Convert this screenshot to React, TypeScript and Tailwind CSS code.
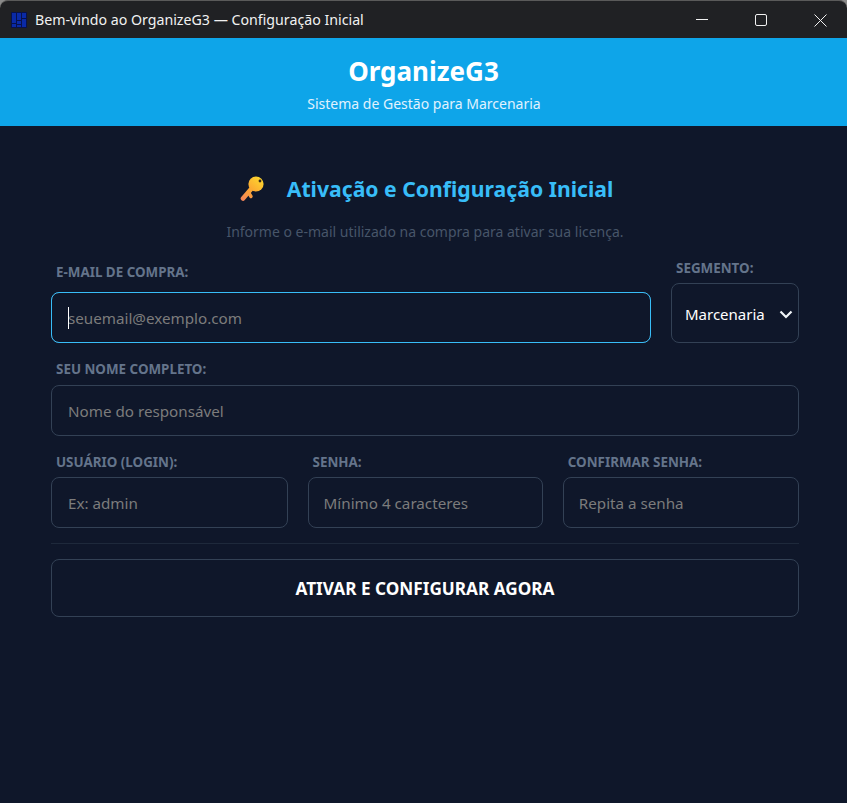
const font = "font-['Noto_Sans','Open_Sans',sans-serif]";

function Field({ label, placeholder, className = "", gapClass = "mb-[7px]", padClass = "pl-4" }: { label: string; placeholder: string; className?: string; gapClass?: string; padClass?: string }) {
  return (
    <div className={className}>
      <label className={`block pl-[5px] h-[17px] leading-[17px] text-[13.4px] font-bold uppercase text-[#64748b] ${gapClass}`}>{label}</label>
      <input
        placeholder={placeholder}
        className={`block w-full h-[51px] pr-4 rounded-lg border border-[#334155] bg-[#0f172a] text-[15.2px] text-white outline-none placeholder:text-[#7c7c7c] ${padClass}`}
      />
    </div>
  );
}

function KeyIcon() {
  return (
    <svg width="26" height="26" viewBox="0 0 26 26">
      <defs>
        <linearGradient id="key" gradientUnits="userSpaceOnUse" x1="2" y1="24" x2="20" y2="3">
          <stop offset="0" stopColor="#f4845a" />
          <stop offset="0.5" stopColor="#fba832" />
          <stop offset="1" stopColor="#fdd22e" />
        </linearGradient>
      </defs>
      <path d="M3 22.5 L12 12" stroke="url(#key)" strokeWidth="4.6" strokeLinecap="round" fill="none" />
      <path d="M8.5 16.5 L11 20.5" stroke="url(#key)" strokeWidth="3.4" strokeLinecap="round" fill="none" />
      <circle cx="16" cy="8" r="7.6" fill="url(#key)" />
      <circle cx="20" cy="5" r="1.4" fill="#3a2a1a" />
    </svg>
  );
}

export default function App() {
  return (
    <div className={`${font} w-[847px] h-[803px] flex flex-col overflow-hidden bg-[#0f172a]`}>
      {/* Window title bar */}
      <div className="bg-[#8a8a8a]">
        <div className="h-[38px] flex items-center rounded-t-lg border-t border-[#5a5a5a] bg-[#202124] pl-[11px]">
          <svg width="16" height="16" viewBox="0 0 16 16" className="mr-2">
            <rect width="16" height="16" fill="#08124a" />
            <path d="M1 1h4v10H1zM1 12h4v3H1zM6 1h4v7H6zM6 9h4v3H6zM6 13h4v2H6zM11 1h4v5h-4zM11 7h4v8h-4z" fill="#0a2aa6" />
          </svg>
          <span className="text-[14.2px] text-[#f1f1f1] whitespace-nowrap">Bem-vindo ao OrganizeG3 — Configuração Inicial</span>
          <div className="ml-auto mr-[4px] flex items-center text-white">
            <svg width="46" height="38" viewBox="0 0 46 38" className="mr-[13px]">
              <path d="M17 18.5h12" stroke="#f1f1f1" strokeWidth="1" />
            </svg>
            <svg width="46" height="38" viewBox="0 0 46 38">
              <rect x="17.5" y="13.5" width="11" height="11" rx="1.5" fill="none" stroke="#f1f1f1" strokeWidth="1" />
            </svg>
            <svg width="46" height="38" viewBox="0 0 46 38" className="ml-[13px]">
              <path d="M17.5 13.5l12 12M29.5 13.5l-12 12" stroke="#f1f1f1" strokeWidth="1" />
            </svg>
          </div>
        </div>
      </div>

      {/* Header */}
      <div className="h-[88px] bg-[#0ea5e9] flex flex-col items-center text-white">
        <h1 className="mt-[14px] h-[38px] leading-[38px] text-[26px] font-bold">OrganizeG3</h1>
        <p className="mt-[4px] pl-[1px] text-[14px] leading-[20px] text-[#e0f2fe]">Sistema de Gestão para Marcenaria</p>
      </div>

      {/* Form */}
      <div className="flex-1 pl-[51px] pr-[48px]">
        <div className="mt-[47px] pl-[3px] h-[32px] flex items-center justify-center gap-[21px]">
          <KeyIcon />
          <h2 className="text-[21.2px] font-bold text-[#38bdf8] leading-[32px]">Ativação e Configuração Inicial</h2>
        </div>
        <p className="mt-[17px] text-center text-[14px] leading-[20px] text-[#475569]">Informe o e-mail utilizado na compra para ativar sua licença.</p>

        <div className="mt-[18px] flex items-end gap-5">
          <div className="relative flex-1">
            <Field label="E-mail de compra:" placeholder="seuemail@exemplo.com" gapClass="mb-[11px]" />
            <div className="absolute left-0 right-0 bottom-0 h-[51px] rounded-lg border border-[#38bdf8] pointer-events-none">
              <div className="absolute left-[16px] top-[14px] w-px h-[22px] bg-white" />
            </div>
          </div>
          <div className="w-[128px]">
            <label className="block pl-[5px] mb-[6px] h-[17px] leading-[17px] text-[13.4px] font-bold uppercase text-[#64748b]">Segmento:</label>
            <div className="h-[60px] rounded-lg border border-[#334155] flex items-center pt-[2px] pl-[13px] pr-[4px] justify-between text-[15px] text-white">
              <span>Marcenaria</span>
              <svg width="14" height="9" viewBox="0 0 14 9" className="mr-[1px]">
                <path d="M1.5 1.5L7 7l5.5-5.5" fill="none" stroke="#f1f5f9" strokeWidth="2.2" />
              </svg>
            </div>
          </div>
        </div>

        <Field className="mt-[18px]" label="Seu nome completo:" placeholder="Nome do responsável" />

        <div className="mt-[18px] grid grid-cols-[236.6px_235.2px_236.2px] gap-5">
          <Field label="Usuário (login):" placeholder="Ex: admin" gapClass="mb-[6px]" />
          <Field label="Senha:" placeholder="Mínimo 4 caracteres" gapClass="mb-[6px]" padClass="pl-[15px]" />
          <Field label="Confirmar senha:" placeholder="Repita a senha" gapClass="mb-[6px]" padClass="pl-[15px]" />
        </div>

        <div className="mt-[15px] border-t border-[#1e293b]" />

        <button className="mt-[15px] pt-[2px] w-full h-[58px] rounded-lg border border-[#334155] text-[17.2px] font-bold text-white uppercase">
          Ativar e configurar agora
        </button>
      </div>
    </div>
  );
}
